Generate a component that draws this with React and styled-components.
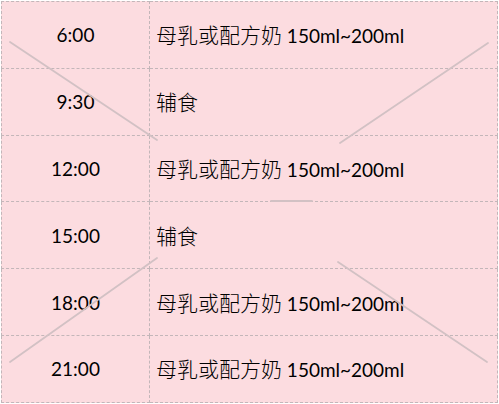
import React from 'react';
import styled, { createGlobalStyle } from 'styled-components';

const GlobalStyle = createGlobalStyle`
  html, body {
    margin: 0;
    padding: 0;
    background: #ffffff;
  }
  body {
    font-family: Lato, "Noto Sans CJK SC", sans-serif;
  }
`;

const Wrapper = styled.div`
  position: relative;
  width: 497px;
  padding: 1px 0 0 1px;
`;

const Table = styled.table`
  width: 497px;
  border-collapse: collapse;
  background: #fcdce0;
  color: #000000;
`;

const Row = styled.tr`
  height: 66.8px;
`;

const Cell = styled.td`
  border: 1px dashed #c3b6b9;
  padding: 0 0 0 ${(p) => (p.$time ? '0' : '6px')};
  width: ${(p) => (p.$time ? '147px' : 'auto')};
  text-align: ${(p) => (p.$time ? 'center' : 'left')};
  font-size: 19px;
  line-height: 1;
  vertical-align: middle;
`;

const Cjk = styled.span`
  font-family: "Noto Sans CJK SC", sans-serif;
  font-size: 21px;
  font-weight: 300;
`;

const Watermark = styled.svg`
  position: absolute;
  left: 0;
  top: 0;
  pointer-events: none;
`;

const meal = (
  <>
    <Cjk>母乳或配方奶</Cjk> 150ml~200ml
  </>
);
const solid = <Cjk>辅食</Cjk>;

const rows = [
  { time: '6:00', food: meal },
  { time: '9:30', food: solid },
  { time: '12:00', food: meal },
  { time: '15:00', food: solid },
  { time: '18:00', food: meal },
  { time: '21:00', food: meal },
];

export default function App() {
  return (
    <>
      <GlobalStyle />
      <Wrapper>
        <Table>
          <tbody>
            {rows.map((r) => (
              <Row key={r.time}>
                <Cell $time>{r.time}</Cell>
                <Cell>{r.food}</Cell>
              </Row>
            ))}
          </tbody>
        </Table>
        <Watermark width="499" height="404" viewBox="0 0 499 404">
          <g stroke="#d2c1c4" strokeWidth="1.8" strokeLinecap="round">
            <line x1="10" y1="42" x2="157" y2="140" />
            <line x1="488" y1="43" x2="340" y2="143" />
            <line x1="10" y1="362" x2="157" y2="258" />
            <line x1="338" y1="262" x2="487" y2="362" />
            <line x1="271" y1="201" x2="312" y2="201" />
          </g>
        </Watermark>
      </Wrapper>
    </>
  );
}
